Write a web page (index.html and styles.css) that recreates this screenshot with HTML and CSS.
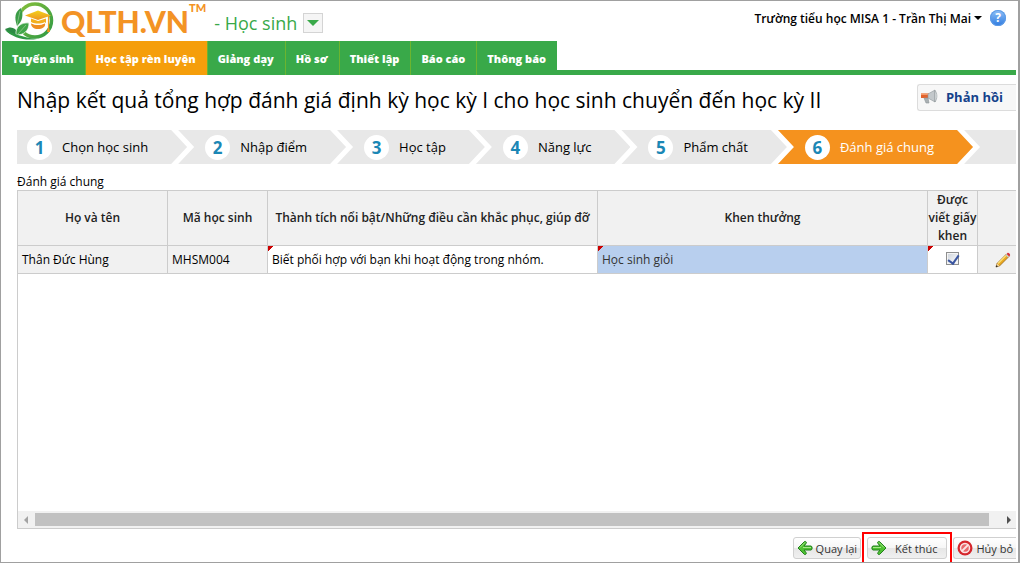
FILE: index.html
```html
<!DOCTYPE html>
<html lang="vi">
<head>
    <meta charset="UTF-8">
    <meta name="viewport" content="width=device-width, initial-scale=1.0">
    <title>QLTH.VN - Học sinh</title>
    <link rel="stylesheet" href="styles.css">
</head>
<body>
    <div class="page">
        <header class="top-bar">
            <a class="logo" href="#">
                <svg class="logo-mark" width="52" height="40" viewBox="0 0 52 40" aria-hidden="true">
                    <defs>
                        <linearGradient id="ring" x1="0" y1="0" x2="1" y2="1">
                            <stop offset="0" stop-color="#86bf3a"/>
                            <stop offset="1" stop-color="#2f9a45"/>
                        </linearGradient>
                        <linearGradient id="cap" x1="0" y1="0" x2="0" y2="1">
                            <stop offset="0" stop-color="#f3d21c"/>
                            <stop offset="1" stop-color="#ee9420"/>
                        </linearGradient>
                    </defs>
                    <circle cx="33" cy="19.500" r="16.500" fill="none" stroke="url(#ring)" stroke-width="3.500"/>
                    <path d="M12 24c0-8 2-14 7-18l3 12-4 8z" fill="#fff"/>
                    <path d="M19 7c-6 4-7 9-4 18 5-4 7-11 4-18z" fill="#3a9c46"/>
                    <path d="M3 28c6-3 10-2 14 5-4 2-10 1-14-5z" fill="#2c8a43"/>
                    <path d="M14 34c-1-8 5-13 13-12 0 8-5 12-13 12z" fill="#3fa548" stroke="#fff" stroke-width="0.700"/>
                    <path d="M18 10l-3 14M24 24l-8 9" stroke="#a9d5a4" stroke-width="0.600" fill="none"/>
                    <path d="M3 29c9 3 15 7 32 9-12 2-24-1-32-9z" fill="#2f9a45"/>
                    <path d="M23 14.500L36 9.500l13 5L36 19z" fill="url(#cap)"/>
                    <path d="M29 17.500l7 2.500 8-2.500v4c-4 2-11 2-15 0z" fill="#f3b01f"/>
                    <path d="M29 22c4 2.500 10 2.500 14 0 1 4-3 6-7 6s-7-2-7-6z" fill="#ee8e22"/>
                    <path d="M29 21c4 2 10 2 14 0v1.200c-4 2.200-10 2.200-14 0z" fill="#fff"/>
                    <path d="M46.500 15v11" stroke="#f0a01f" stroke-width="1.200"/>
                    <path d="M46.500 24l-1.500 7h3z" fill="#ee9420"/>
                </svg>
                <span class="logo-text">QLTH.VN<sup>TM</sup></span>
            </a>
            <div class="module">
                <span>- Học sinh</span>
                <button type="button" class="module-toggle" aria-label="Chọn phân hệ"></button>
            </div>
            <div class="account">
                <button type="button" class="account-name">Trường tiểu học MISA 1 - Trần Thị Mai</button>
                <a class="help" href="#" aria-label="Trợ giúp">?</a>
            </div>
        </header>

        <nav class="menu">
            <a href="#">Tuyển sinh</a>
            <a href="#" class="active">Học tập rèn luyện</a>
            <a href="#">Giảng dạy</a>
            <a href="#">Hồ sơ</a>
            <a href="#">Thiết lập</a>
            <a href="#">Báo cáo</a>
            <a href="#">Thông báo</a>
        </nav>

        <main>
            <div class="title-row">
                <h1>Nhập kết quả tổng hợp đánh giá định kỳ học kỳ I cho học sinh chuyển đến học kỳ II</h1>
                <button type="button" class="feedback">
                    <svg width="18" height="16" viewBox="0 0 18 16" aria-hidden="true">
                        <path d="M1 4.500h8v4.500H1z" fill="#e2622b"/>
                        <path d="M1 4.500h8v1.500H1z" fill="#f39a6b"/>
                        <path d="M8 5l7-4v12L8 9z" fill="#c3c8cb" stroke="#8d9599" stroke-width="0.600"/>
                        <path d="M15 1.500c2.500 3 2.500 8 0 11.500z" fill="#e6eaec" stroke="#8d9599" stroke-width="0.600"/>
                        <path d="M4 9h4l1 5H6z" fill="#aab0b3" stroke="#8d9599" stroke-width="0.600"/>
                    </svg>
                    Phản hồi
                </button>
            </div>

            <ol class="steps">
                <li><b>1</b>Chọn học sinh</li>
                <li><b>2</b>Nhập điểm</li>
                <li><b>3</b>Học tập</li>
                <li><b>4</b>Năng lực</li>
                <li><b>5</b>Phẩm chất</li>
                <li class="current"><b>6</b>Đánh giá chung</li>
                <li class="rest"></li>
            </ol>

            <p class="grid-label">Đánh giá chung</p>
            <div class="grid">
                <table>
                    <colgroup>
                        <col class="col-name">
                        <col class="col-code">
                        <col class="col-text">
                        <col class="col-text">
                        <col class="col-small">
                        <col class="col-small">
                    </colgroup>
                    <thead>
                        <tr>
                            <th>Họ và tên</th>
                            <th>Mã học sinh</th>
                            <th>Thành tích nổi bật/Những điều cần khắc phục, giúp đỡ</th>
                            <th>Khen thưởng</th>
                            <th>Được viết giấy khen</th>
                            <th></th>
                        </tr>
                    </thead>
                    <tbody>
                        <tr>
                            <td>Thân Đức Hùng</td>
                            <td>MHSM004</td>
                            <td class="edit">Biết phối hợp với bạn khi hoạt động trong nhóm.</td>
                            <td class="edit selected">Học sinh giỏi</td>
                            <td class="edit center"><input type="checkbox" checked aria-label="Được viết giấy khen"></td>
                            <td class="center">
                                <button type="button" class="icon-button" aria-label="Sửa">
                                    <svg width="16" height="16" viewBox="0 0 16 16">
                                        <path d="M1 15l1-3.500L11.500 2l2.500 2.500L4.500 14z" fill="#e9a820" stroke="#8a5a14" stroke-width="0.700"/>
                                        <path d="M3 11.500l8-8" stroke="#fbe27a" stroke-width="1.200"/>
                                        <path d="M11.500 2l1-1c1-.7 3.200 1.500 2.500 2.500l-1 1z" fill="#d8303a"/>
                                        <path d="M10.500 3l2.500 2.500 1-1L11.500 2z" fill="#c9ccd2"/>
                                        <path d="M1 15l1-3.500L4.500 14z" fill="#f2d9a8"/>
                                        <path d="M.8 15.200l.7-2.200L3 14.500z" fill="#222"/>
                                    </svg>
                                </button>
                            </td>
                        </tr>
                    </tbody>
                </table>
                <div class="scrollbar">
                    <span class="arrow-left"></span>
                    <span class="thumb"></span>
                    <span class="arrow-right"></span>
                </div>
            </div>
        </main>

        <footer class="actions">
            <button type="button">
                <svg width="16" height="16" viewBox="0 0 16 16" aria-hidden="true">
                    <path d="M1 8l6.500-6.500c1.500-.5 2.500 1 1.500 2L7 6h7c1.500 0 1.500 4 0 4H7l2 2.500c1 1-.5 2.500-1.500 2z" fill="#4fc132" stroke="#21801c" stroke-linejoin="round"/>
                    <path d="M3 7.500l5-5M6 7.500h8" fill="none" stroke="#a6e887"/>
                </svg>
                Quay lại
            </button>
            <button type="button" class="finish">
                <svg width="16" height="16" viewBox="0 0 16 16" aria-hidden="true">
                    <path d="M15 8L8.500 1.500C7 1 6 2.500 7 3.500L9 6H2C.5 6 .5 10 2 10h7l-2 2.500c-1 1 .5 2.500 1.500 2z" fill="#4fc132" stroke="#21801c" stroke-linejoin="round"/>
                    <path d="M13 7.500l-5-5M2 7.500h8" fill="none" stroke="#a6e887"/>
                </svg>
                Kết thúc
            </button>
            <button type="button">
                <svg width="16" height="16" viewBox="0 0 16 16" aria-hidden="true">
                    <circle cx="8" cy="8" r="7.500" fill="#d5262c"/>
                    <circle cx="8" cy="8" r="4.500" fill="#e8676a" stroke="#fbe3e3" stroke-width="1.500"/>
                    <path d="M5 11l6-6" stroke="#fbe3e3" stroke-width="1.800"/>
                </svg>
                Hủy bỏ
            </button>
        </footer>
    </div>
</body>
</html>
```
FILE: styles.css
```css
* {
    box-sizing: border-box;
}

body {
    margin: 0;
    font-family: "Open Sans", "Noto Sans", sans-serif;
    font-size: 12px;
    color: #000;
    background-color: #fff;
}

button {
    font: inherit;
    cursor: pointer;
}

a {
    text-decoration: none;
}

.page {
    display: flex;
    flex-direction: column;
    min-height: 100vh;
    padding: 0 2px 0 1px;
    border: 1px solid #a0a0a0;
    border-right-width: 2px;
    overflow: hidden;
}

/* Header */
.top-bar {
    display: flex;
    align-items: center;
    height: 40px;
}

.logo {
    display: flex;
    align-items: center;
    color: #f39325;
}

.logo-mark {
    margin-right: 7px;
}

.logo-text {
    display: flex;
    font-family: Lato, sans-serif;
    font-size: 30px;
    font-weight: 900;
    line-height: 42px;
}

.logo-text sup {
    font-size: 11px;
    line-height: 16px;
}

.module {
    display: flex;
    align-items: center;
    gap: 6px;
    margin-left: 8px;
    padding-top: 4px;
    color: #39a949;
    font-size: 18px;
}

.module-toggle {
    display: flex;
    align-items: center;
    justify-content: center;
    width: 20px;
    height: 20px;
    padding: 0;
    border: 1px solid #d4d4d4;
    background-color: #f5f5f5;
}

.module-toggle::before {
    content: "";
    border: 6px solid transparent;
    border-top-color: #39a949;
    border-bottom: 0;
}

.account {
    display: flex;
    align-items: center;
    gap: 8px;
    margin: 0 10px 6px auto;
}

.account-name {
    display: flex;
    align-items: center;
    gap: 3px;
    padding: 0;
    border: 0;
    background: none;
    font-weight: 600;
}

.account-name::after {
    content: "";
    border: 4px solid transparent;
    border-top-color: #000;
    border-bottom: 0;
}

.help {
    width: 16px;
    height: 16px;
    border-radius: 50%;
    background: linear-gradient(#8fc1f7, #2f7be0);
    box-shadow: inset 0 0 0 1px #5e9be6;
    color: #fff;
    font-weight: bold;
    line-height: 16px;
    text-align: center;
}

/* Menu */
.menu {
    display: flex;
    height: 34px;
    background: linear-gradient(#39a949, #39a949) bottom / 100% 5px no-repeat;
}

.menu a {
    padding: 0 11px 0 10px;
    border-right: 1px solid #6cb52f;
    background-color: #39a949;
    color: #fff;
    font-size: 11px;
    font-weight: 800;
    line-height: 36px;
}

.menu a:last-child {
    border-right: 0;
}

.menu a.active {
    background-color: #f59e0b;
}

/* Content */
main {
    display: flex;
    flex: 1;
    flex-direction: column;
    padding-left: 15px;
}

.title-row {
    display: flex;
    align-items: center;
    justify-content: space-between;
    height: 55px;
    padding-bottom: 5px;
}

h1 {
    margin: 0;
    font-size: 21px;
    font-weight: normal;
    white-space: nowrap;
}

.feedback {
    display: flex;
    align-items: center;
    gap: 8px;
    height: 27px;
    margin-bottom: 6px;
    padding: 0 13px 0 2px;
    border: 1px solid #dcdcdc;
    border-right: 0;
    border-radius: 3px 0 0 3px;
    background-color: #f7f7f7;
    color: #15428b;
    font-size: 13px;
    font-weight: bold;
    white-space: nowrap;
}

.steps {
    display: flex;
    margin: 0;
    padding: 0;
    list-style: none;
}

.steps li {
    display: flex;
    align-items: center;
    gap: 10px;
    height: 34px;
    margin-right: -9px;
    padding: 0 39px 0 27px;
    background-color: #e8e8e8;
    clip-path: polygon(0 0, calc(100% - 16px) 0, 100% 50%, calc(100% - 16px) 100%, 0 100%, 16px 50%);
    font-size: 13px;
    white-space: nowrap;
}

.steps li:first-child {
    padding-left: 10px;
    clip-path: polygon(0 0, calc(100% - 16px) 0, 100% 50%, calc(100% - 16px) 100%, 0 100%);
}

.steps b {
    width: 25px;
    height: 25px;
    border-radius: 50%;
    background-color: #fff;
    color: #1b87b5;
    font-size: 17px;
    line-height: 25px;
    text-align: center;
}

.steps li.current {
    background-color: #f5921e;
    color: #fff;
}

.steps li.rest {
    flex: 1;
    margin-right: 0;
    padding: 0;
    clip-path: polygon(0 0, 100% 0, 100% 100%, 0 100%, 16px 50%);
}

.grid-label {
    margin: 10px 0 0;
    line-height: 16px;
}

/* Grid */
.grid {
    display: flex;
    flex: 1;
    flex-direction: column;
    justify-content: space-between;
    border: 1px solid #ccc;
    border-right: 0;
    overflow: hidden;
}

table {
    width: 1010px;
    table-layout: fixed;
    border-spacing: 0;
}

.col-name {
    width: 150px;
}

.col-code {
    width: 100px;
}

.col-text {
    width: 330px;
}

.col-small {
    width: 50px;
}

th,
td {
    border-right: 1px solid #ccc;
    border-bottom: 1px solid #ccc;
    background-color: #f1f1f1;
}

th {
    height: 55px;
    padding: 0;
    color: #222;
    font-weight: 600;
    line-height: 18px;
}

td {
    height: 28px;
    padding: 0 4px;
}

td.edit {
    background: linear-gradient(135deg, #c00 4px, transparent 4px) no-repeat #fff;
}

td.selected {
    background-color: #b8cfee;
    color: #333;
}

td.center {
    padding: 0;
    text-align: center;
}

input[type="checkbox"] {
    display: inline-flex;
    width: 13px;
    height: 13px;
    margin: 0 0 3px;
    border: 1px solid #8e8f8f;
    background: linear-gradient(135deg, #ccd2da, #fff);
    box-shadow: inset 0 0 0 1px #f4f4f4;
    appearance: none;
    vertical-align: middle;
}

input[type="checkbox"]:checked::before {
    content: "";
    width: 5px;
    height: 9px;
    margin-left: 3px;
    border: solid #3a55a0;
    border-width: 0 2px 2px 0;
    transform: rotate(35deg);
}

.icon-button {
    display: inline-flex;
    padding: 0;
    border: 0;
    background: none;
    vertical-align: middle;
}

.scrollbar {
    display: flex;
    align-items: center;
    height: 17px;
    padding: 0 5px 0 6px;
    background-color: #f1f1f1;
}

.thumb {
    flex: 1;
    height: 13px;
    margin: 0 18px 0 7px;
    background-color: #c1c1c1;
}

.arrow-left,
.arrow-right {
    border: 4px solid transparent;
}

.arrow-left {
    border-left: 0;
    border-right-color: #a3a3a3;
}

.arrow-right {
    border-right: 0;
    border-left-color: #505050;
}

/* Footer buttons */
.actions {
    display: flex;
    justify-content: flex-end;
    gap: 6px;
    padding: 8px 0 3px;
}

.actions button {
    display: flex;
    align-items: center;
    gap: 3px;
    height: 22px;
    padding: 0 3px;
    border: 1px solid #d0d0d0;
    border-radius: 3px;
    background: linear-gradient(#fff, #f6f6f6 50%, #e6e6e6 50%, #f0f0f0);
    color: #333;
    font-size: 11px;
    white-space: nowrap;
}

.actions button:last-child {
    border-right: 0;
    border-radius: 3px 0 0 3px;
}

.actions .finish {
    position: relative;
    gap: 8px;
    padding: 0 9px 0 3px;
}

/* Red frame around the finish button */
.actions .finish::after {
    content: "";
    position: absolute;
    inset: -6px;
    border: 2px solid #f00;
}
```
